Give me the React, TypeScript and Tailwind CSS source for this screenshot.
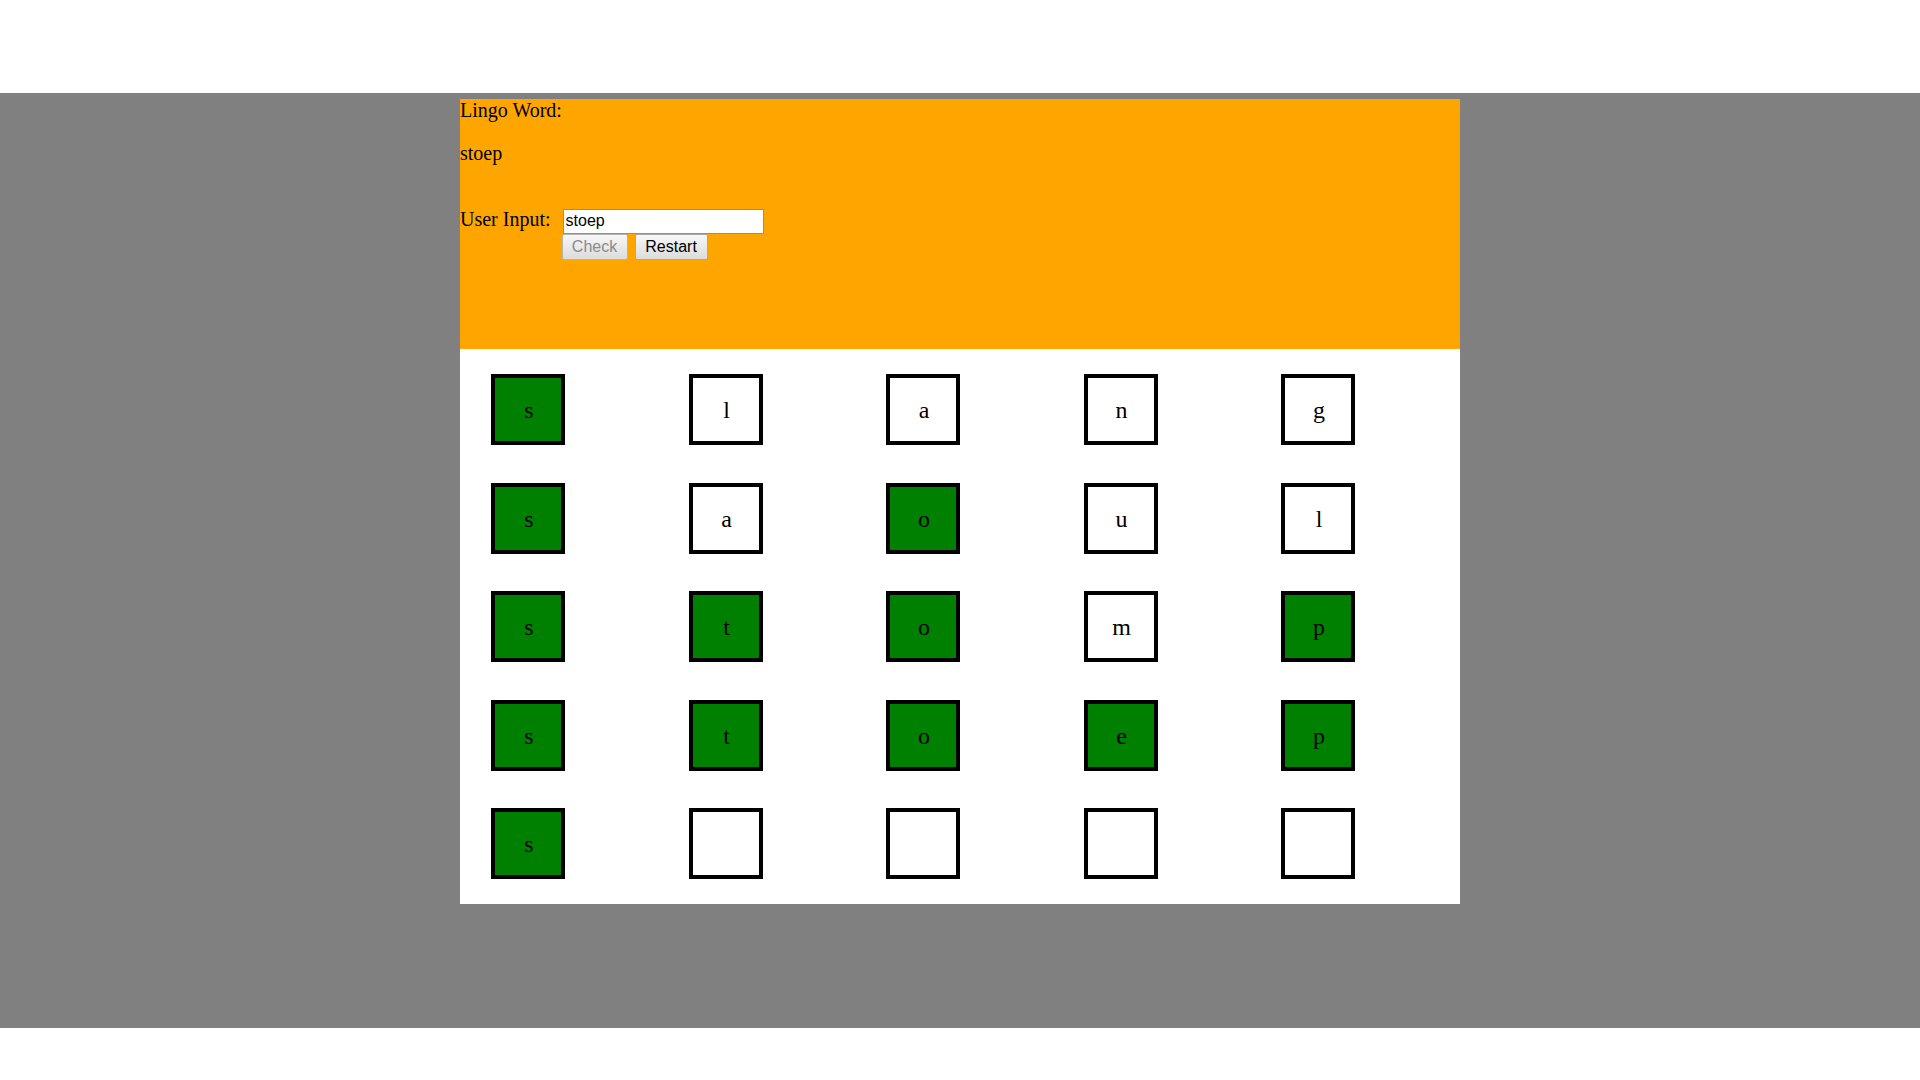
import React, { useState } from 'react';

type Tile = { letter: string; correct: boolean };

const rows: Tile[][] = [
  [
    { letter: 's', correct: true },
    { letter: 'l', correct: false },
    { letter: 'a', correct: false },
    { letter: 'n', correct: false },
    { letter: 'g', correct: false },
  ],
  [
    { letter: 's', correct: true },
    { letter: 'a', correct: false },
    { letter: 'o', correct: true },
    { letter: 'u', correct: false },
    { letter: 'l', correct: false },
  ],
  [
    { letter: 's', correct: true },
    { letter: 't', correct: true },
    { letter: 'o', correct: true },
    { letter: 'm', correct: false },
    { letter: 'p', correct: true },
  ],
  [
    { letter: 's', correct: true },
    { letter: 't', correct: true },
    { letter: 'o', correct: true },
    { letter: 'e', correct: true },
    { letter: 'p', correct: true },
  ],
  [
    { letter: 's', correct: true },
    { letter: '', correct: false },
    { letter: '', correct: false },
    { letter: '', correct: false },
    { letter: '', correct: false },
  ],
];

const App = () => {
  const [input, setInput] = useState('stoep');

  return (
    <div className="min-h-[1080px] bg-white pt-[93px] font-['Liberation_Serif',serif] text-[20px] leading-[23px] text-black">
      <div className="h-[935px] bg-[#808080] pt-[6px]">
        <div className="mx-auto w-[1000px]">
          <div className="h-[250px] bg-[#ffa500]">
            <p>Lingo Word:</p>
            <p className="mt-[20px]">stoep</p>
            <div className="mt-[43px] flex items-baseline">
              <span className="mr-[12px]">User Input:</span>
              <div className="flex flex-col items-start">
                <input
                  value={input}
                  onChange={(e) => setInput(e.target.value)}
                  className="h-[25px] w-[201px] border border-[#8f8f8f] bg-white px-[2px] font-['Liberation_Sans',sans-serif] text-[16px] leading-[19px] text-black outline-none"
                />
                <div className="-ml-px flex gap-[7px]">
                  <button
                    disabled
                    className="h-[26px] w-[66px] rounded-[2px] border border-[#b4b4b4] bg-gradient-to-b from-[#f7f7f7] to-[#dcdcdc] font-['Liberation_Sans',sans-serif] text-[16px] leading-[18px] text-[#8a8a8a]"
                  >
                    Check
                  </button>
                  <button
                    onClick={() => setInput('')}
                    className="h-[26px] w-[73px] rounded-[2px] border border-[#a8a8a8] bg-gradient-to-b from-[#f7f7f7] to-[#dcdcdc] font-['Liberation_Sans',sans-serif] text-[16px] leading-[18px] text-black"
                  >
                    Restart
                  </button>
                </div>
              </div>
            </div>
          </div>
          <div className="h-[555px] bg-white pl-[31px] pt-[25px]">
            <div className="grid grid-cols-[repeat(5,74px)] gap-x-[123.5px] gap-y-[37.5px]">
              {rows.map((row, r) =>
                row.map((tile, c) => (
                  <div
                    key={r + '-' + c}
                    className={
                      'flex h-[71px] w-[74px] items-center justify-center border-4 border-black pl-[2px] pt-[2px] text-[24px] leading-[27px] ' +
                      (tile.correct ? 'bg-[#008000]' : 'bg-white')
                    }
                  >
                    {tile.letter}
                  </div>
                ))
              )}
            </div>
          </div>
        </div>
      </div>
    </div>
  );
};

export default App;
